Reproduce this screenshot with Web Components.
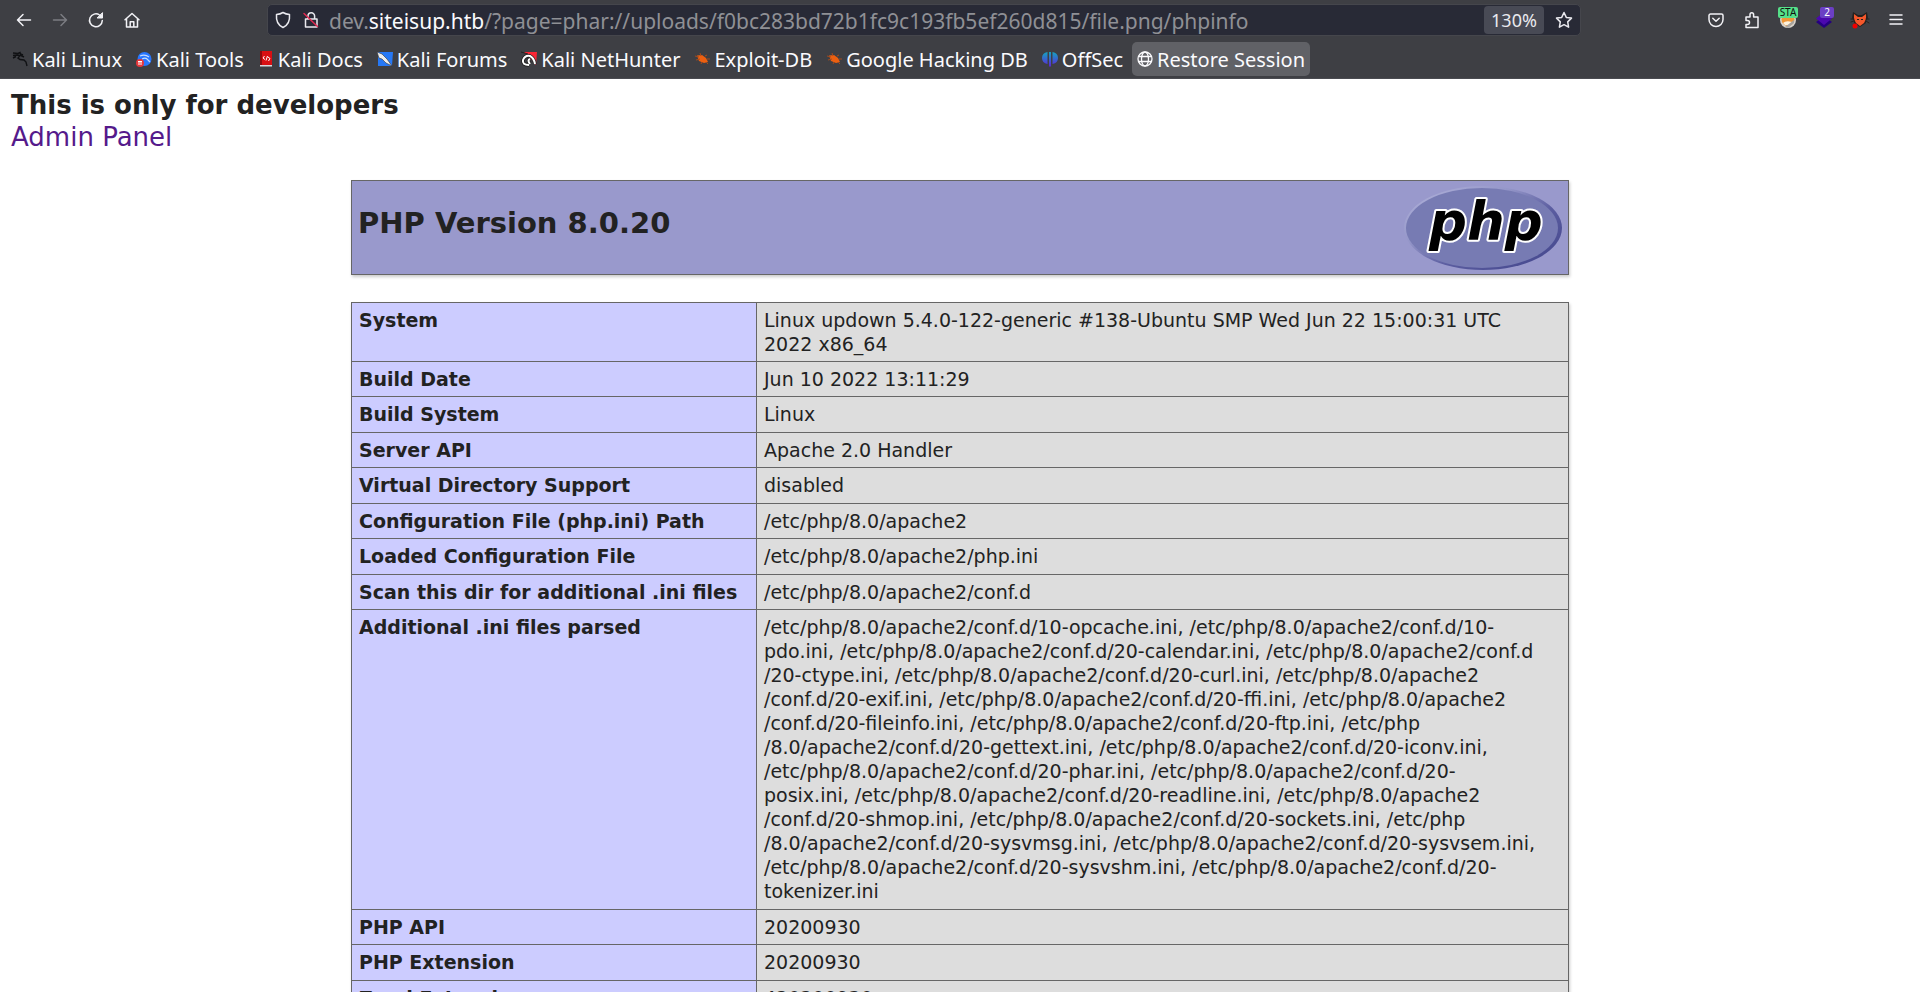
<!DOCTYPE html>
<html lang="en">
<head>
<meta charset="utf-8">
<title>PHP 8.0.20 - phpinfo()</title>
<style>
html,body{margin:0;height:100%}
body{background:#fff;color:#222;font-family:"DejaVu Sans",sans-serif;overflow:hidden}
</style>
</head>
<body>
<browser-window>
  <browser-toolbar slot="chrome"></browser-toolbar>
  <bookmark-bar slot="chrome"></bookmark-bar>
  <dev-page></dev-page>
</browser-window>
<script>
class Base extends HTMLElement{
  constructor(){
    super();
    this.attachShadow({mode:'open'}).innerHTML=this.render();
  }
}

customElements.define('browser-window',class extends Base{
  render(){return `<style>
    :host{display:flex;flex-direction:column;height:100vh;overflow:hidden}
    header{background:#3e3f44;border-bottom:1px solid #4a4b51;flex:none}
    main{flex:1;min-height:0;overflow:hidden}
  </style><header><slot name="chrome"></slot></header><main><slot></slot></main>`}
});

customElements.define('url-field',class extends Base{
  render(){return `<style>
    :host{display:flex;align-items:center;box-sizing:border-box;height:32px;background:#282a36;border:1px solid #45464c;border-radius:5px;padding:0 6px 0 5px;color:#8f9095;font:21px/30px "Noto Sans",sans-serif}
    svg{width:20px;height:20px;flex:none;display:block;fill:none;stroke:#e9e9ee;stroke-width:1.5;stroke-linejoin:round;stroke-linecap:round}
    button{border:0;background:none;padding:0;color:inherit;font:inherit}
    .id{margin-right:8px}
    .lock{margin-right:8px}
    .url{flex:1;white-space:nowrap;min-width:0;overflow:hidden;padding-top:2px}
    b{font-weight:400;color:#fbfbfe}
    .zoom{background:#484a55;border-radius:4px;height:28px;width:60px;color:#e9e9ee;font-size:18px;margin-right:10px;line-height:28px}
  </style>
  <button class="id" aria-label="Tracking protection"><svg viewBox="0 0 20 20"><path d="M10 2.500C7.500 4 5.500 4.300 3.500 4.500C3 10 4.500 15 10 17.500C15.500 15 17 10 16.500 4.500C14.500 4.300 12.500 4 10 2.500Z"/></svg></button>
  <button class="lock" aria-label="Connection not secure"><svg viewBox="0 0 20 20"><path d="M4.500 9H16V17H4.500ZM7 9V6A3.300 3.300 0 0 1 13.600 6V9"/><path d="M3 3.500L16.500 16.500" stroke="#e22850"/></svg></button>
  <div class="url" role="textbox" aria-label="Address">dev.<b>siteisup.htb</b>/?page=phar://uploads/f0bc283bd72b1fc9c193fb5ef260d815/file.png/phpinfo</div>
  <button class="zoom">130%</button>
  <button aria-label="Bookmark"><svg viewBox="0 0 20 20"><path d="M10 2.500L12.300 7.400L17.500 8.100L13.700 11.900L14.600 17.200L10 14.700L5.400 17.200L6.300 11.900L2.500 8.100L7.700 7.400Z"/></svg></button>`}
});

customElements.define('browser-toolbar',class extends Base{
  render(){return `<style>
    :host{display:grid;grid-template-columns:256px minmax(0,1314fr) 339px;align-items:center;height:40px;padding:0 0 0 11px}
    nav,.ext{display:flex;align-items:center;gap:10px}
    .ext{justify-content:flex-end;padding-right:11px}
    button{position:relative;width:26px;height:32px;padding:0;border:0;background:none;display:flex;align-items:center;justify-content:center}
    svg{width:20px;height:20px;display:block;fill:none;stroke:#f2f2f6;stroke-width:1.5;stroke-linecap:round;stroke-linejoin:round;flex:none}
    .off svg{stroke:#7c7d82}
    .badge{position:absolute;top:3px;height:11px;border-radius:2px;font:10px/11px "Noto Sans",sans-serif;text-align:center}
    .sta{left:3px;width:20px;background:#56e08a;color:#111}
    .two{left:9px;width:14px;background:#6b3fc4;color:#fff}
  </style>
  <nav>
    <button aria-label="Back"><svg viewBox="0 0 20 20"><path d="M16.500 10H3.500M9 4.500L3.500 10L9 15.500"/></svg></button>
    <button class="off" aria-label="Forward"><svg viewBox="0 0 20 20"><path d="M3.500 10H16.500M11 4.500L16.500 10L11 15.500"/></svg></button>
    <button aria-label="Reload"><svg viewBox="0 0 20 20"><path d="M16.300 10.500A6.400 6.400 0 1 1 13.500 5L16 7.500"/><path d="M16.500 3V8H11.500Z" fill="#f2f2f6" stroke-width="1"/></svg></button>
    <button aria-label="Home"><svg viewBox="0 0 20 20"><path d="M3 9.800L10 3.500L17 9.800M4.500 8.800V17H15.500V8.800M8.200 17V11.800H11.800V17"/></svg></button>
  </nav>
  <url-field></url-field>
  <div class="ext">
    <button aria-label="Pocket"><svg viewBox="0 0 20 20"><path d="M4.500 4H15.500A1.500 1.500 0 0 1 17 5.500V9.500A7 7 0 0 1 3 9.500V5.500A1.500 1.500 0 0 1 4.500 4ZM6.800 8.300L10 11.300L13.200 8.300"/></svg></button>
    <button aria-label="Extensions"><svg viewBox="0 0 20 20"><path d="M4 7H8V4.500A1.800 1.800 0 0 1 11.600 4.500V7H16V17.500H4V14.500H5.500A1.800 1.800 0 0 0 5.500 10.500H4Z"/></svg></button>
    <button aria-label="Profile"><svg viewBox="0 0 20 20"><g stroke="none"><circle cx="10" cy="10" r="8" fill="#d8d3cc"/><circle cx="10" cy="9.500" r="6.500" fill="#ef9738"/><path d="M5 13Q8 10 14 12L12 15H7Z" fill="#fff3dd"/><path d="M7 17L16 10V13L10 18Z" fill="#a9a5a0"/></g></svg><span class="badge sta">STA</span></button>
    <button aria-label="Wappalyzer"><svg viewBox="0 0 20 20"><g stroke="none"><path d="M10 6L18 12L10 18L2 12Z" fill="#250080"/><path d="M10 2L18 8.500L10 15L2 8.500Z" fill="#4b08ae"/></g></svg><span class="badge two">2</span></button>
    <button aria-label="Fox"><svg viewBox="0 0 20 20"><g stroke="none"><path d="M3 2L8 5H12L17 2L18 8L16 11V13L10 17L4 13V11L2 8Z" fill="#26211f"/><path d="M4 4L8 7H12L16 4L16 9L14 13L10 16L6 13L4 9Z" fill="#f4572b"/><path d="M1 9H4M1 12L4 11M16 9H19M16 11L19 13" stroke="#26211f" stroke-width="1"/><path d="M7 9h2v1h-2zM11 9h2v1h-2z" fill="#222"/><circle cx="5" cy="16" r="2.500" fill="#f00000"/></g></svg></button>
    <button aria-label="Menu"><svg viewBox="0 0 20 20"><path d="M4 5H16M4 9.500H16M4 14H16"/></svg></button>
  </div>`}
});

const icons={
  dragon:`<path d="M1 2L6 2.500L8 1.500L8.500 3L11 4M1 4.500L5 4L8 4.500L6 7L8 8.500L12 9L14 11L15 15M1 7L4 5.500M8 4L12 6" fill="none" stroke="#101114" stroke-width="1.4"/>`,
  tools:`<circle cx="8.500" cy="8" r="7" fill="#2777ff"/><path d="M4 5Q9 3 13 6M6 8Q10 6 12 9L14 11" fill="none" stroke="#c8dcff" stroke-width="1.2"/><circle cx="4" cy="12" r="4" fill="#e6373b"/><path d="M2 10.500H6M3 10.500V14M5 10.500V14" stroke="#fff" fill="none"/>`,
  docs:`<path d="M2 0H14V14H2Z" fill="#d90f13"/><path d="M2 0H4V14H2Z" fill="#8d090d"/><path d="M2 14H14V15.500H2Z" fill="#d8d8dc"/><path d="M6.500 5L5 7L7 8.500M8 9.500L9.500 5M10 6L12 7.500L10.500 10" fill="none" stroke="#fff"/>`,
  forums:`<path d="M1 1H16L15 15H1Z" fill="#2678f5"/><path d="M0 1L5 3L10 8L15 15L9 12L5 8L2 7Z" fill="#eee" stroke="#333" stroke-width=".6"/>`,
  hunter:`<path d="M3 1H16L15 14L10 8Z" fill="#fb2635"/><path d="M0 1L7 3" stroke="#222" fill="none"/><path d="M8 14Q1 14 2 9Q4 4 9 5Q13 7 14 13M9 13Q6 9 9 8" fill="none" stroke="#222" stroke-width="3.6"/><path d="M8 14Q1 14 2 9Q4 4 9 5Q13 7 14 13M9 13Q6 9 9 8" fill="none" stroke="#fff" stroke-width="2"/>`,
  bug:`<path d="M3 4.500L8 4L12 7L14 11L10 12L5 10Z" fill="#ec5f10"/><path d="M1 5L5 6M2 9L6 8M6 2L7 5M11 5L13 4M13 8L16 8M7 13L8 11M12 11L14 13" stroke="#a44a1c" fill="none"/>`,
  off:`<defs><linearGradient id="g" gradientUnits="userSpaceOnUse" x1="0" y1="1" x2="0" y2="15"><stop stop-color="#14a4bf"/><stop offset="1" stop-color="#5a28d8"/></linearGradient></defs><path d="M5.500 1Q0 2 0 7T5.500 13ZM10.500 1Q16 2 16 7T10.500 13ZM7 1H9V15.500H7Z" fill="url(#g)"/>`,
  globe:`<g fill="none" stroke="#fbfbfe" stroke-width="1.3"><circle cx="8" cy="8" r="7"/><ellipse cx="8" cy="8" rx="3.500" ry="7"/><path d="M1.500 5.500H14.500M1.500 10.500H14.500"/></g>`
};

customElements.define('bookmark-link',class extends Base{
  render(){return `<style>
    :host{display:block}
    a{display:flex;align-items:center;height:34px;padding:0 5px;border-radius:5px;color:#fbfbfe;text-decoration:none;font:20px/34px "Noto Sans",sans-serif;white-space:nowrap}
    :host([active]) a{background:#606166}
    svg{width:16px;height:16px;margin-right:4px;flex:none}
    span{padding-top:2px}
  </style><a href="#"><svg viewBox="0 0 16 16">${icons[this.getAttribute('icon')]}</svg><span><slot></slot></span></a>`}
});

customElements.define('bookmark-bar',class extends Base{
  render(){return `<style>
    :host{display:flex;height:38px;padding:2px 7px 0;box-sizing:border-box;gap:4px}
  </style>
  ${[['dragon','Kali Linux'],['tools','Kali Tools'],['docs','Kali Docs'],['forums','Kali Forums'],['hunter','Kali NetHunter'],['bug','Exploit-DB'],['bug','Google Hacking DB'],['off','OffSec']].map(([i,t])=>`<bookmark-link icon="${i}">${t}</bookmark-link>`).join('')}<bookmark-link icon="globe" active>Restore Session</bookmark-link>`}
});

customElements.define('php-logo',class extends Base{
  render(){return `<style>:host{display:block;width:158px;height:84px}svg{display:block;width:100%;height:100%;overflow:visible}
    text{font:italic bold 53px "DejaVu Sans",sans-serif}</style>
  <svg viewBox="0 0 158 84" role="img" aria-label="PHP logo">
    <defs><linearGradient id="e" x1="0" y1="0" x2="1" y2="1"><stop offset="0" stop-color="#b4b5dc"/><stop offset=".35" stop-color="#9496c8"/><stop offset=".6" stop-color="#5b5da0"/><stop offset="1" stop-color="#40438a"/></linearGradient></defs>
    <ellipse cx="79" cy="42" rx="79" ry="42" fill="url(#e)"/>
    <ellipse cx="78" cy="42" rx="76" ry="40" fill="#777bb3"/>
    <text x="25" y="54" fill="#000" stroke="#fff" stroke-width="4" paint-order="stroke" stroke-linejoin="round">php</text>
  </svg>`}
});

customElements.define('php-header',class extends Base{
  render(){return `<style>
    :host{display:flex;justify-content:space-between;align-items:flex-start;box-sizing:border-box;height:95px;padding:5px 6px;background:#9999cc;border:1px solid #666;box-shadow:1px 2px 3px #ccc}
    h1{margin:19px 0 0;font-size:29px;line-height:36px}
  </style><h1><slot></slot></h1><php-logo></php-logo>`}
});

const iniLines=`/etc/php/8.0/apache2/conf.d/10-opcache.ini, /etc/php/8.0/apache2/conf.d/10-
pdo.ini, /etc/php/8.0/apache2/conf.d/20-calendar.ini, /etc/php/8.0/apache2/conf.d
/20-ctype.ini, /etc/php/8.0/apache2/conf.d/20-curl.ini, /etc/php/8.0/apache2
/conf.d/20-exif.ini, /etc/php/8.0/apache2/conf.d/20-ffi.ini, /etc/php/8.0/apache2
/conf.d/20-fileinfo.ini, /etc/php/8.0/apache2/conf.d/20-ftp.ini, /etc/php
/8.0/apache2/conf.d/20-gettext.ini, /etc/php/8.0/apache2/conf.d/20-iconv.ini,
/etc/php/8.0/apache2/conf.d/20-phar.ini, /etc/php/8.0/apache2/conf.d/20-
posix.ini, /etc/php/8.0/apache2/conf.d/20-readline.ini, /etc/php/8.0/apache2
/conf.d/20-shmop.ini, /etc/php/8.0/apache2/conf.d/20-sockets.ini, /etc/php
/8.0/apache2/conf.d/20-sysvmsg.ini, /etc/php/8.0/apache2/conf.d/20-sysvsem.ini,
/etc/php/8.0/apache2/conf.d/20-sysvshm.ini, /etc/php/8.0/apache2/conf.d/20-
tokenizer.ini`;
const rows=[
  ['System','Linux updown 5.4.0-122-generic #138-Ubuntu SMP Wed Jun 22 15:00:31 UTC\n2022 x86_64'],
  ['Build Date','Jun 10 2022 13:11:29'],
  ['Build System','Linux'],
  ['Server API','Apache 2.0 Handler'],
  ['Virtual Directory Support','disabled'],
  ['Configuration File (php.ini) Path','/etc/php/8.0/apache2'],
  ['Loaded Configuration File','/etc/php/8.0/apache2/php.ini'],
  ['Scan this dir for additional .ini files','/etc/php/8.0/apache2/conf.d'],
  ['Additional .ini files parsed',iniLines],
  ['PHP API','20200930'],
  ['PHP Extension','20200930'],
  ['Zend Extension','420200930']
];

customElements.define('info-table',class extends Base{
  render(){return `<style>
    :host{display:block}
    table{width:100%;border-collapse:collapse;table-layout:fixed;box-shadow:1px 2px 3px #ccc;font-size:19px;line-height:24px}
    col:first-child{width:405px}
    th,td{border:1px solid #666;padding:5px 7px;text-align:left;vertical-align:top}
    tr:nth-child(2n+3)>*{padding-bottom:6px}
    th{background:#ccccff;white-space:nowrap}
    td{background:#ddd;white-space:pre-line}
  </style><table><colgroup><col><col></colgroup><tbody>${rows.map(([k,v])=>`<tr><th scope="row">${k}</th><td>${v}</td></tr>`).join('')}</tbody></table>`}
});

customElements.define('dev-page',class extends Base{
  render(){return `<style>
    :host{display:block;padding:10px 11px;font-size:26px;line-height:32px}
    a{color:#551a8b;text-decoration:none}
    article{max-width:1218px;margin:27px auto 0;display:grid;gap:27px}
  </style>
  <b>This is only for developers</b><br><a href="#">Admin Panel</a>
  <article><php-header>PHP Version 8.0.20</php-header><info-table></info-table></article>`}
});
</script>
</body>
</html>
